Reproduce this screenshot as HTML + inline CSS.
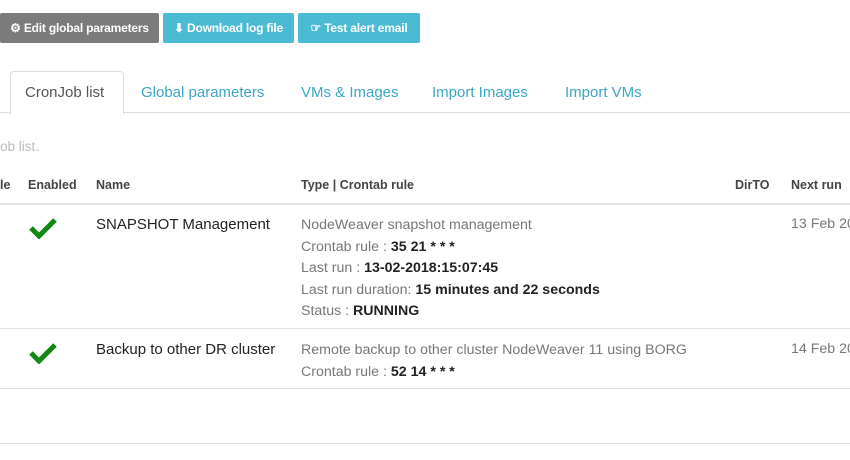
<!DOCTYPE html>
<html><head><meta charset="utf-8"><style>
body{margin:0;width:850px;height:460px;background:#fff;font-family:"Liberation Sans",sans-serif;position:relative;overflow:hidden;color:#333}
.a{position:absolute;white-space:nowrap}
.btn{position:absolute;top:13px;height:30px;line-height:30px;color:#fff;font-size:12px;font-weight:bold;text-align:center;border-radius:2px;letter-spacing:-0.2px}
.g{background:#7b7b7b}.c{background:#4bbbd4}
.tab{position:absolute;top:84px;font-size:15px;color:#3aa7c4}
.h{font-size:12.5px;font-weight:bold;color:#444;top:178px}
.t{font-size:14.2px;color:#777}
.t b{color:#222;font-weight:bold}
.line{position:absolute;left:0;width:850px;background:#e4e4e4}
</style></head><body>
<div class="btn g" style="left:0;width:159px">⚙ Edit global parameters</div>
<div class="btn c" style="left:163px;width:131px">⬇ Download log file</div>
<div class="btn c" style="left:298px;width:122px">☞ Test alert email</div>
<div class="line" style="top:112px;height:1px;background:#ddd"></div>
<div class="a" style="left:10px;top:71px;width:112px;height:42px;border:1px solid #ddd;border-bottom:1px solid #fff;border-radius:4px 4px 0 0;background:#fff"></div>
<div class="tab" style="left:25px;color:#555">CronJob list</div>
<div class="tab" style="left:141px">Global parameters</div>
<div class="tab" style="left:301px">VMs &amp; Images</div>
<div class="tab" style="left:432px">Import Images</div>
<div class="tab" style="left:565px">Import VMs</div>
<div class="a" style="left:0;top:139px;font-size:13.5px;color:#bbb">ob list.</div>
<div class="a h" style="left:0">le</div>
<div class="a h" style="left:28px">Enabled</div>
<div class="a h" style="left:96px">Name</div>
<div class="a h" style="left:301px">Type | Crontab rule</div>
<div class="a h" style="left:735px">DirTO</div>
<div class="a h" style="left:791px">Next run</div>
<div class="line" style="top:203px;height:2px"></div>
<svg class="a" style="left:29px;top:217px" width="28" height="22" viewBox="0 0 28 22"><path d="M2 11 L10 19 L26 3" stroke="#118811" stroke-width="5" fill="none"/></svg>
<div class="a" style="left:96px;top:216px;font-size:15px;color:#222">SNAPSHOT Management</div>
<div class="a t" style="left:301px;top:215px;line-height:21.5px">NodeWeaver snapshot management<br>Crontab rule : <b>35 21 * * *</b><br>Last run : <b>13-02-2018:15:07:45</b><br>Last run duration: <b>15 minutes and 22 seconds</b><br>Status : <b>RUNNING</b></div>
<div class="a t" style="left:791px;top:216px">13 Feb 2018</div>
<div class="line" style="top:328px;height:1px"></div>
<svg class="a" style="left:29px;top:342px" width="28" height="22" viewBox="0 0 28 22"><path d="M2 11 L10 19 L26 3" stroke="#118811" stroke-width="5" fill="none"/></svg>
<div class="a" style="left:96px;top:341px;font-size:15px;color:#222">Backup to other DR cluster</div>
<div class="a t" style="left:301px;top:340px;line-height:21.5px">Remote backup to other cluster NodeWeaver 11 using BORG<br>Crontab rule : <b>52 14 * * *</b></div>
<div class="a t" style="left:791px;top:341px">14 Feb 2018</div>
<div class="line" style="top:388px;height:1px"></div>
<div class="line" style="top:443px;height:1px"></div>
</body></html>
